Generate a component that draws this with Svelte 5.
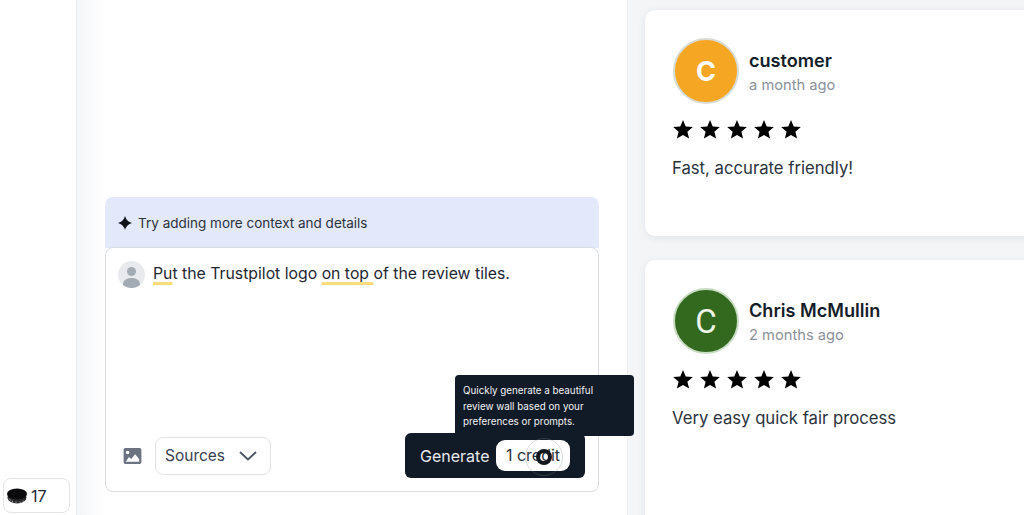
<script>
  const reviews = [
    { name: "customer", time: "a month ago", text: "Fast, accurate friendly!", initial: "C", colour: "orange" },
    { name: "Chris McMullin", time: "2 months ago", text: "Very easy quick fair process", initial: "C", colour: "green" },
  ];
  const stars = [1, 2, 3, 4, 5];
</script>

<div class="page">
  <aside class="sidebar">
    <div class="credits">
      <svg class="coin" width="20" height="16" viewBox="0 0 20 16">
        <ellipse cx="10" cy="9.500" rx="9.500" ry="6" fill="#2a2a2e" />
        <path d="M2 10.500l1.500 2M5 12.500l1 2M9 13.500v2M13 13.500l.5 2M16 12.500l1 1.800" stroke="#ddd" stroke-width="0.6" />
        <ellipse cx="10" cy="6" rx="10" ry="5.500" fill="#0b0b0d" />
      </svg>
      <span>17</span>
    </div>
  </aside>

  <main class="main">
    <div class="composer">
      <div class="hint">
        <svg width="14" height="14" viewBox="0 0 14 14">
          <path d="M7 0Q8.500 5.500 14 7 8.500 8.500 7 14 5.500 8.500 0 7 5.500 5.500 7 0z" fill="#10131a" />
        </svg>
        <span>Try adding more context and details</span>
      </div>
      <div class="editor">
        <div class="prompt">
          <svg class="user" width="27" height="27" viewBox="0 0 27 27">
            <circle cx="13.500" cy="13.500" r="13.500" fill="#e8eaed" />
            <circle cx="13.500" cy="10.500" r="4.500" fill="#a3abb5" />
            <path d="M5 24c0-5 3.500-7 8.500-7s8.500 2 8.500 7c-2.500 2-5.500 3-8.500 3s-6-1-8.500-3z" fill="#a3abb5" />
          </svg>
          <p><span class="mark">Pu</span>t the Trustpilot logo <span class="mark">on top{" "}</span>of the review tiles.</p>
        </div>
        <div class="actions">
          <svg class="image" width="19" height="16" viewBox="0 0 20 18">
            <path fill-rule="evenodd" d="M2 0h16a2 2 0 0 1 2 2v14a2 2 0 0 1-2 2H2a2 2 0 0 1-2-2V2a2 2 0 0 1 2-2zm2.500 3a2 2 0 1 0 0 4 2 2 0 0 0 0-4zM2.500 15.500h15v-3L13 7l-4.500 5.500-2.500-2.500z" fill="#6b7280" />
          </svg>
          <div class="sources">
            <span>Sources</span>
            <svg width="18" height="10" viewBox="0 0 18 10">
              <path d="M1.500 1.500L9 8.500l7.500-7" fill="none" stroke="#4b5563" stroke-width="1.800" stroke-linecap="round" stroke-linejoin="round" />
            </svg>
          </div>
          <div class="generate">
            <div class="tooltip">Quickly generate a beautiful review wall based on your preferences or prompts.</div>
            <span>Generate</span>
            <span class="cost">1 credit</span>
            <span class="cursor"></span>
          </div>
        </div>
      </div>
    </div>
  </main>

  <section class="wall">
    {#each reviews as review}
      <article class="card">
        <header>
          <div class="avatar {review.colour}">{review.initial}</div>
          <div>
            <h3>{review.name}</h3>
            <time>{review.time}</time>
          </div>
        </header>
        <div class="stars">
          {#each stars as star}
            <svg width="20" height="19" viewBox="0 0 20 19" data-star={star}>
              <path d="M10 0l2.700 6.500 7.100.6-5.400 4.600 1.700 6.900L10 15l-6.100 3.600 1.700-6.900L.2 7.100l7.100-.6z" fill="#000" />
            </svg>
          {/each}
        </div>
        <p>{review.text}</p>
      </article>
    {/each}
  </section>
</div>

<style>
  :global(body) {
    margin: 0;
    background: #fff;
  }

  .page {
    display: flex;
    width: 1024px;
    height: 515px;
    overflow: hidden;
    font-family: Inter, "Liberation Sans", sans-serif;
    color: #1f2733;
  }

  .sidebar {
    box-sizing: border-box;
    flex: 0 0 77px;
    display: flex;
    align-items: flex-end;
    padding: 0 0 2px 3px;
    border-right: 1px solid #e9ebee;
  }

  .credits {
    box-sizing: border-box;
    display: flex;
    align-items: center;
    gap: 4px;
    width: 67px;
    height: 35px;
    padding-left: 3px;
    border: 1px solid #e1e4e8;
    border-radius: 8px;
    font-size: 16px;
    background: #fff;
  }

  .main {
    box-sizing: border-box;
    flex: 0 0 550px;
    padding: 197px 28px 0 28px;
    background: linear-gradient(90deg, #f4f5f7, #fff 28px);
  }

  .composer {
    width: 494px;
    height: 295px;
    display: flex;
    flex-direction: column;
  }

  .hint {
    display: flex;
    align-items: center;
    gap: 6px;
    height: 51px;
    padding-left: 13px;
    box-sizing: border-box;
    background: #e3e8fb;
    border-radius: 8px 8px 0 0;
    font-size: 13.500px;
    color: #2c3340;
  }

  .editor {
    flex: 1;
    display: flex;
    flex-direction: column;
    justify-content: space-between;
    margin-top: -1px;
    padding: 13px 13px 13px 12px;
    background: #fff;
    border: 1px solid #d9dde3;
    border-radius: 8px;
  }

  .prompt {
    display: flex;
    gap: 8px;
  }

  .prompt p {
    margin: 1px 0 0;
    font-size: 15.800px;
    line-height: 24px;
    color: #1f2733;
  }

  .mark {
    text-decoration: underline #fddc7c 3px;
    text-decoration-skip-ink: none;
    text-underline-offset: 3px;
  }

  .actions {
    display: flex;
    align-items: center;
  }

  .image {
    margin: 0 13px 0 5px;
  }

  .sources {
    box-sizing: border-box;
    display: flex;
    align-items: center;
    justify-content: space-between;
    width: 116px;
    height: 38px;
    padding: 0 13px 0 9px;
    border: 1px solid #dfe2e7;
    border-radius: 8px;
    font-size: 15.500px;
    color: #384150;
  }

  .generate {
    position: relative;
    box-sizing: border-box;
    display: flex;
    align-items: center;
    justify-content: space-between;
    width: 180px;
    height: 45px;
    margin-left: auto;
    padding: 0 15px 0 15px;
    background: #111a27;
    border-radius: 6px;
    font-size: 16px;
    color: #e8eaed;
  }

  .cost {
    box-sizing: border-box;
    width: 74px;
    height: 31px;
    line-height: 31px;
    text-align: center;
    background: #fff;
    border-radius: 9px;
    color: #2b3240;
  }

  .tooltip {
    position: absolute;
    left: 50px;
    top: -58px;
    box-sizing: border-box;
    width: 179px;
    height: 61px;
    padding: 8px 8px;
    background: #111a27;
    border-radius: 4px;
    font-size: 9.800px;
    line-height: 15.500px;
    color: #f1f3f5;
  }

  .cursor {
    position: absolute;
    left: 131px;
    top: 16px;
    box-sizing: border-box;
    width: 16px;
    height: 16px;
    border: 4px solid #14171d;
    border-radius: 50%;
  }

  .cursor::after {
    content: "";
    position: absolute;
    inset: -15px;
    border: 1px solid rgba(130, 135, 140, 0.3);
    border-radius: 50%;
  }

  .wall {
    box-sizing: border-box;
    flex: 1;
    min-width: 0;
    display: flex;
    flex-direction: column;
    gap: 24px;
    padding: 10px 0 0 17px;
    background: #f3f5f7;
    border-left: 1px solid #eef0f2;
  }

  .card {
    box-sizing: border-box;
    flex: 0 0 226px;
    width: 420px;
    padding: 28px;
    background: #fff;
    border-radius: 10px;
    box-shadow: 0 2px 8px rgba(20, 30, 45, 0.08);
  }

  .card:last-child {
    flex-basis: 300px;
  }

  header {
    display: flex;
    align-items: center;
    gap: 10px;
  }

  .avatar {
    box-sizing: border-box;
    width: 66px;
    height: 66px;
    border-radius: 50%;
    border: 2px solid #d8dcd6;
    display: flex;
    align-items: center;
    justify-content: center;
    color: #fff;
  }

  .orange {
    background: #f5a623;
    font-size: 27px;
    font-weight: 700;
  }

  .green {
    background: #33691e;
    border-color: #c9dcc4;
    font-family: Roboto, sans-serif;
    font-size: 33px;
    color: #eef5e8;
  }

  h3 {
    margin: 0;
    font-size: 18.100px;
    line-height: 24px;
    font-weight: 600;
    color: #151d2b;
  }

  time {
    display: block;
    margin-top: 3px;
    font-size: 14.700px;
    line-height: 20px;
    color: #8b919b;
  }

  .stars {
    display: flex;
    gap: 7px;
    margin-top: 16px;
  }

  .stars svg {
    display: block;
  }

  .card p {
    margin: 17px 0 0 -1px;
    font-size: 16.700px;
    line-height: 24px;
    color: #2b3240;
  }
</style>
